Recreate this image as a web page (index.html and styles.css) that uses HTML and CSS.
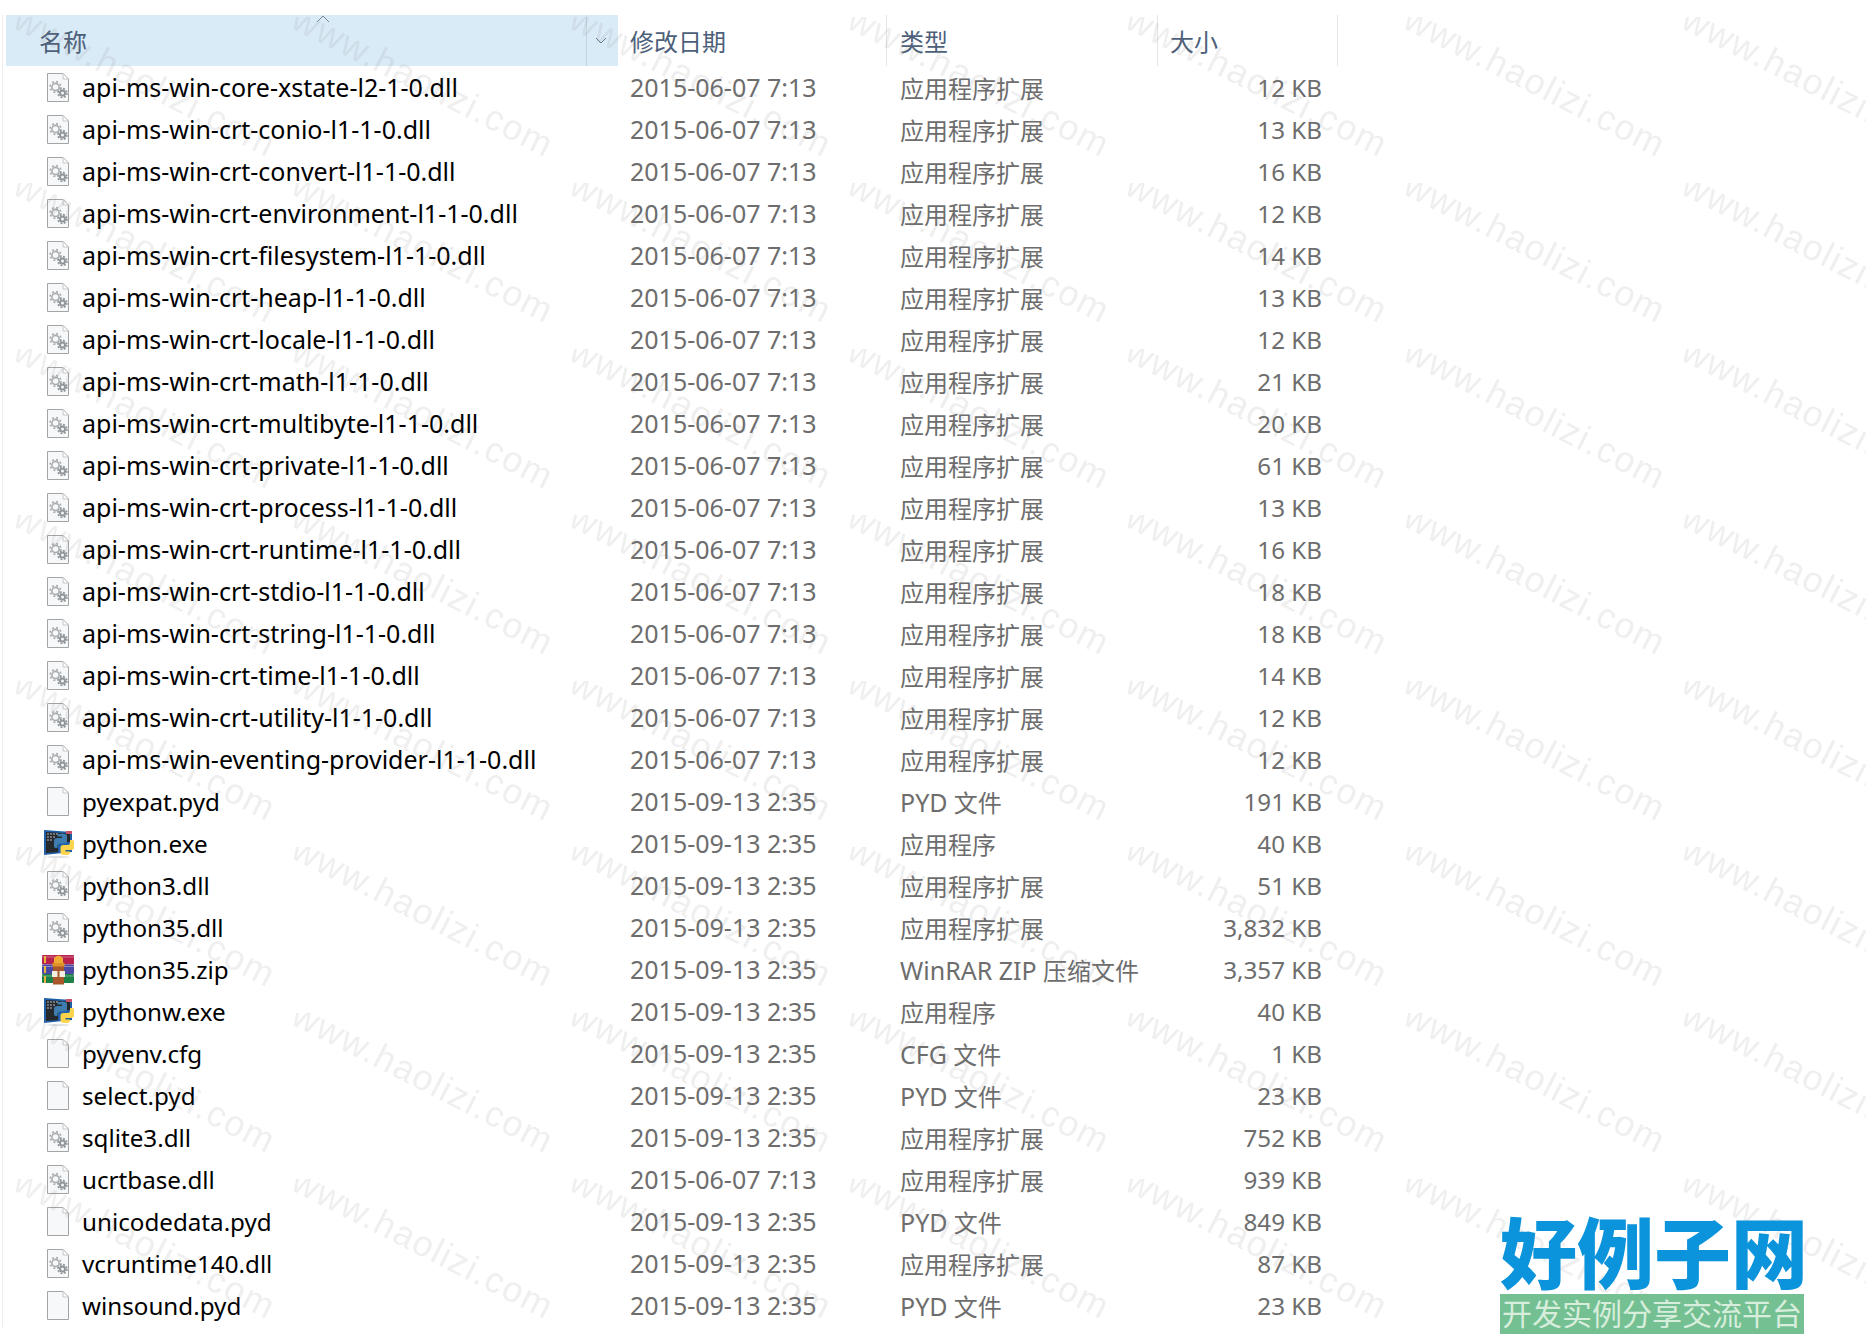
FILE: index.html
```html
<!DOCTYPE html>
<html lang="zh-CN">
<head>
  <meta charset="UTF-8" />
  <title>Python</title>
  <link rel="stylesheet" href="styles.css">
</head>
<body>
  <svg class="defs" width="0" height="0">
    <defs>
      <symbol id="page" viewBox="0 0 40 32">
        <path d="M9.5 2.5H25L30.5 8V30.5H9.5Z" fill="#f6f8f9" stroke="#a2a4a6"/>
        <path d="M25 2.5V8H30.5Z" fill="#fff" stroke="#c4c6c8"/>
      </symbol>
      <symbol id="dll" viewBox="0 0 40 32">
        <use href="#page"/>
        <circle cx="17.5" cy="16" r="3.6" fill="none" stroke="#a9adb0" stroke-width="1.6"/>
        <circle cx="17.5" cy="16" r="5.4" fill="none" stroke="#a9adb0" stroke-width="1.6" stroke-dasharray="2 2.24"/>
        <circle cx="24.5" cy="22" r="2.5" fill="none" stroke="#8f9599" stroke-width="2"/>
        <circle cx="24.5" cy="22" r="4.4" fill="none" stroke="#8f9599" stroke-width="1.6" stroke-dasharray="2 1.45"/>
      </symbol>
      <symbol id="py" viewBox="0 0 40 32">
        <path d="M6 3 34 5V25L6 28Z" fill="#1f5fa8"/>
        <path d="M8 5 32 6.500V15H20V25L8 26Z" fill="#26292c"/>
        <path d="M9 7H20M9 10H17M9 13H15" stroke="#8c9096" stroke-width="1.500" stroke-dasharray="2 1"/>
        <path d="M28 4H34V7H28Z" fill="#c9536a"/>
        <path d="M16 19V13.500Q16 11 19 11H24V9.500H19.500V8Q20 6.500 24 6.500Q29 6.500 29 9V14Q29 16.500 26 16.500H21.500Q19.500 16.500 19.500 19V21H17.500Q16 21 16 19Z" fill="#3f7cb0"/>
        <path d="M36 15V20.500Q36 23 33 23H27.500V24.500H32V26Q31.500 28 27.500 28Q22.500 28 22.500 25.500V20.500Q22.500 18 25.500 18H30Q32 18 32 15.500V13H34.500Q36 13 36 15Z" fill="#fbd44c"/>
        <ellipse cx="20" cy="30" rx="12" ry="1.200" fill="#dfe3e6"/>
      </symbol>
      <symbol id="rar" viewBox="0 0 40 32">
        <rect x="4" y="2" width="32" height="9.500" rx="1" fill="#b8234e"/>
        <rect x="4" y="11.500" width="32" height="9.500" rx="1" fill="#4a4aa5"/>
        <rect x="4" y="21" width="32" height="9" rx="1" fill="#1d8047"/>
        <path d="M4 4H36M4 13.500H36M4 23H36" stroke="#fff" stroke-opacity=".35"/>
        <path d="M7 3V30" stroke="#e9b53a" stroke-width="2" stroke-dasharray="7 3"/>
        <rect x="15" y="9" width="11" height="22.500" fill="#a8582a"/>
        <rect x="14" y="18" width="13" height="6" fill="#f3ede4"/>
        <path d="M20.500 18V25" stroke="#a8582a" stroke-width="2"/>
        <path d="M16 11V5Q20.500 0 25 5V11Z" fill="#f0ab34"/>
        <rect x="14.500" y="10" width="12" height="3.500" fill="#e0912a"/>
      </symbol>
    </defs>
  </svg>

  <main class="explorer">
    <div class="list-head">
      <div class="head-cell head-name">
        <span>名称</span>
        <svg class="sort-caret" width="14" height="8" viewBox="0 0 14 8"><path d="M1 7 7 1 13 7" fill="none" stroke="#7a8594"/></svg>
        <span class="head-drop">
          <svg width="12" height="7" viewBox="0 0 12 7"><path d="M1 1 6 6 11 1" fill="none" stroke="#6d7785"/></svg>
        </span>
      </div>
      <div class="head-cell head-date">修改日期</div>
      <div class="head-cell head-type">类型</div>
      <div class="head-cell head-size">大小</div>
    </div>

    <div class="file-row api"><div class="file-name"><svg class="file-icon"><use href="#dll"/></svg>api-ms-win-core-xstate-l2-1-0.dll</div><div class="file-date">2015-06-07 7:13</div><div class="file-type">应用程序扩展</div><div class="file-size">12 KB</div></div>
    <div class="file-row api"><div class="file-name"><svg class="file-icon"><use href="#dll"/></svg>api-ms-win-crt-conio-l1-1-0.dll</div><div class="file-date">2015-06-07 7:13</div><div class="file-type">应用程序扩展</div><div class="file-size">13 KB</div></div>
    <div class="file-row api"><div class="file-name"><svg class="file-icon"><use href="#dll"/></svg>api-ms-win-crt-convert-l1-1-0.dll</div><div class="file-date">2015-06-07 7:13</div><div class="file-type">应用程序扩展</div><div class="file-size">16 KB</div></div>
    <div class="file-row api"><div class="file-name"><svg class="file-icon"><use href="#dll"/></svg>api-ms-win-crt-environment-l1-1-0.dll</div><div class="file-date">2015-06-07 7:13</div><div class="file-type">应用程序扩展</div><div class="file-size">12 KB</div></div>
    <div class="file-row api"><div class="file-name"><svg class="file-icon"><use href="#dll"/></svg>api-ms-win-crt-filesystem-l1-1-0.dll</div><div class="file-date">2015-06-07 7:13</div><div class="file-type">应用程序扩展</div><div class="file-size">14 KB</div></div>
    <div class="file-row api"><div class="file-name"><svg class="file-icon"><use href="#dll"/></svg>api-ms-win-crt-heap-l1-1-0.dll</div><div class="file-date">2015-06-07 7:13</div><div class="file-type">应用程序扩展</div><div class="file-size">13 KB</div></div>
    <div class="file-row api"><div class="file-name"><svg class="file-icon"><use href="#dll"/></svg>api-ms-win-crt-locale-l1-1-0.dll</div><div class="file-date">2015-06-07 7:13</div><div class="file-type">应用程序扩展</div><div class="file-size">12 KB</div></div>
    <div class="file-row api"><div class="file-name"><svg class="file-icon"><use href="#dll"/></svg>api-ms-win-crt-math-l1-1-0.dll</div><div class="file-date">2015-06-07 7:13</div><div class="file-type">应用程序扩展</div><div class="file-size">21 KB</div></div>
    <div class="file-row api"><div class="file-name"><svg class="file-icon"><use href="#dll"/></svg>api-ms-win-crt-multibyte-l1-1-0.dll</div><div class="file-date">2015-06-07 7:13</div><div class="file-type">应用程序扩展</div><div class="file-size">20 KB</div></div>
    <div class="file-row api"><div class="file-name"><svg class="file-icon"><use href="#dll"/></svg>api-ms-win-crt-private-l1-1-0.dll</div><div class="file-date">2015-06-07 7:13</div><div class="file-type">应用程序扩展</div><div class="file-size">61 KB</div></div>
    <div class="file-row api"><div class="file-name"><svg class="file-icon"><use href="#dll"/></svg>api-ms-win-crt-process-l1-1-0.dll</div><div class="file-date">2015-06-07 7:13</div><div class="file-type">应用程序扩展</div><div class="file-size">13 KB</div></div>
    <div class="file-row api"><div class="file-name"><svg class="file-icon"><use href="#dll"/></svg>api-ms-win-crt-runtime-l1-1-0.dll</div><div class="file-date">2015-06-07 7:13</div><div class="file-type">应用程序扩展</div><div class="file-size">16 KB</div></div>
    <div class="file-row api"><div class="file-name"><svg class="file-icon"><use href="#dll"/></svg>api-ms-win-crt-stdio-l1-1-0.dll</div><div class="file-date">2015-06-07 7:13</div><div class="file-type">应用程序扩展</div><div class="file-size">18 KB</div></div>
    <div class="file-row api"><div class="file-name"><svg class="file-icon"><use href="#dll"/></svg>api-ms-win-crt-string-l1-1-0.dll</div><div class="file-date">2015-06-07 7:13</div><div class="file-type">应用程序扩展</div><div class="file-size">18 KB</div></div>
    <div class="file-row api"><div class="file-name"><svg class="file-icon"><use href="#dll"/></svg>api-ms-win-crt-time-l1-1-0.dll</div><div class="file-date">2015-06-07 7:13</div><div class="file-type">应用程序扩展</div><div class="file-size">14 KB</div></div>
    <div class="file-row api"><div class="file-name"><svg class="file-icon"><use href="#dll"/></svg>api-ms-win-crt-utility-l1-1-0.dll</div><div class="file-date">2015-06-07 7:13</div><div class="file-type">应用程序扩展</div><div class="file-size">12 KB</div></div>
    <div class="file-row api"><div class="file-name"><svg class="file-icon"><use href="#dll"/></svg>api-ms-win-eventing-provider-l1-1-0.dll</div><div class="file-date">2015-06-07 7:13</div><div class="file-type">应用程序扩展</div><div class="file-size">12 KB</div></div>
    <div class="file-row"><div class="file-name"><svg class="file-icon"><use href="#page"/></svg>pyexpat.pyd</div><div class="file-date">2015-09-13 2:35</div><div class="file-type"><span class="latin">PYD</span> 文件</div><div class="file-size">191 KB</div></div>
    <div class="file-row"><div class="file-name"><svg class="file-icon"><use href="#py"/></svg>python.exe</div><div class="file-date">2015-09-13 2:35</div><div class="file-type">应用程序</div><div class="file-size">40 KB</div></div>
    <div class="file-row"><div class="file-name"><svg class="file-icon"><use href="#dll"/></svg>python3.dll</div><div class="file-date">2015-09-13 2:35</div><div class="file-type">应用程序扩展</div><div class="file-size">51 KB</div></div>
    <div class="file-row"><div class="file-name"><svg class="file-icon"><use href="#dll"/></svg>python35.dll</div><div class="file-date">2015-09-13 2:35</div><div class="file-type">应用程序扩展</div><div class="file-size">3,832 KB</div></div>
    <div class="file-row"><div class="file-name"><svg class="file-icon"><use href="#rar"/></svg>python35.zip</div><div class="file-date">2015-09-13 2:35</div><div class="file-type"><span class="latin">WinRAR ZIP</span> 压缩文件</div><div class="file-size">3,357 KB</div></div>
    <div class="file-row"><div class="file-name"><svg class="file-icon"><use href="#py"/></svg>pythonw.exe</div><div class="file-date">2015-09-13 2:35</div><div class="file-type">应用程序</div><div class="file-size">40 KB</div></div>
    <div class="file-row"><div class="file-name"><svg class="file-icon"><use href="#page"/></svg>pyvenv.cfg</div><div class="file-date">2015-09-13 2:35</div><div class="file-type"><span class="latin">CFG</span> 文件</div><div class="file-size">1 KB</div></div>
    <div class="file-row"><div class="file-name"><svg class="file-icon"><use href="#page"/></svg>select.pyd</div><div class="file-date">2015-09-13 2:35</div><div class="file-type"><span class="latin">PYD</span> 文件</div><div class="file-size">23 KB</div></div>
    <div class="file-row"><div class="file-name"><svg class="file-icon"><use href="#dll"/></svg>sqlite3.dll</div><div class="file-date">2015-09-13 2:35</div><div class="file-type">应用程序扩展</div><div class="file-size">752 KB</div></div>
    <div class="file-row"><div class="file-name"><svg class="file-icon"><use href="#dll"/></svg>ucrtbase.dll</div><div class="file-date">2015-06-07 7:13</div><div class="file-type">应用程序扩展</div><div class="file-size">939 KB</div></div>
    <div class="file-row"><div class="file-name"><svg class="file-icon"><use href="#page"/></svg>unicodedata.pyd</div><div class="file-date">2015-09-13 2:35</div><div class="file-type"><span class="latin">PYD</span> 文件</div><div class="file-size">849 KB</div></div>
    <div class="file-row"><div class="file-name"><svg class="file-icon"><use href="#dll"/></svg>vcruntime140.dll</div><div class="file-date">2015-09-13 2:35</div><div class="file-type">应用程序扩展</div><div class="file-size">87 KB</div></div>
    <div class="file-row"><div class="file-name"><svg class="file-icon"><use href="#page"/></svg>winsound.pyd</div><div class="file-date">2015-09-13 2:35</div><div class="file-type"><span class="latin">PYD</span> 文件</div><div class="file-size">23 KB</div></div>
  </main>

  <!-- repeating site watermark over the whole shot -->
  <svg class="watermark" width="1866" height="1344">
    <defs>
      <pattern id="wm" x="12" y="17" width="278" height="166" patternUnits="userSpaceOnUse">
        <text class="wm-text" transform="translate(-1 10) rotate(27)">www.haolizi.com</text>
      </pattern>
    </defs>
    <rect width="1866" height="1344" fill="url(#wm)"/>
  </svg>

  <div class="logo">
    <div class="logo-title">好例子网</div>
    <div class="logo-sub">开发实例分享交流平台</div>
  </div>
</body>
</html>
```

FILE: styles.css
```css
* { margin: 0; padding: 0; box-sizing: border-box; }

:root {
  --head-text: #4c607a;
  --head-hover: #d9ebf7;
  --divider: #e5e5e5;
  --muted: #6d6d6d;
  --cols: 612px 269px 271px 180px;
}

body {
  position: relative;
  width: 1866px;
  height: 1344px;
  overflow: hidden;
  background: white;
  font-family: "Noto Sans", "Noto Sans CJK SC", sans-serif;
  font-size: 24px;
}

.defs {
  position: absolute;
}

.explorer {
  margin: 15px 0 0 2px;
  width: 1400px;
  height: 1312px;
  padding-left: 3px;
  border-left: 1px solid #eee;
}

.list-head {
  display: grid;
  grid-template-columns: var(--cols);
  height: 51px;
  color: var(--head-text);
}

.head-cell {
  display: flex;
  align-items: center;
  border-right: 1px solid var(--divider);
}

.head-name {
  position: relative;
  padding-left: 33px;
  background: var(--head-hover);
  border-right: none;
}

.sort-caret {
  position: absolute;
  left: 310px;
  top: 0;
}

.head-drop {
  position: absolute;
  right: 0;
  top: 0;
  bottom: 0;
  width: 32px;
  padding-right: 4px;
  display: flex;
  align-items: center;
  justify-content: center;
  border-left: 1px solid #c5d6e2;
}

.head-date { padding-left: 12px; }
.head-type { padding-left: 13px; }
.head-size { padding-left: 12px; }

.file-row {
  display: grid;
  grid-template-columns: var(--cols);
  height: 42px;
  align-items: center;
  white-space: nowrap;
}

.file-name {
  display: flex;
  align-items: center;
  gap: 4px;
  padding-left: 32px;
  font-size: 24.2px;
  color: black;
}

/* hyphens run wide in the long names */
.api .file-name { font-size: 25px; }

.file-icon {
  width: 40px;
  height: 32px;
  flex: none;
}

.file-date { padding-left: 12px; font-size: 25px; color: var(--muted); }
.file-type { padding-left: 13px; color: var(--muted); }
.file-size { padding-right: 16px; text-align: right; font-size: 24.2px; color: var(--muted); }

.latin { font-size: 25px; }

.watermark {
  position: absolute;
  left: 0;
  top: 0;
  pointer-events: none;
}

.wm-text {
  font-family: "Liberation Sans", sans-serif;
  font-size: 36px;
  letter-spacing: 1.5px;
  fill: rgba(120, 120, 120, 0.12);
}

.logo {
  position: absolute;
  left: 1500px;
  top: 1206px;
  width: 304px;
}

.logo-title {
  height: 88px;
  font-family: "Noto Sans CJK SC", sans-serif;
  font-size: 77px;
  font-weight: 900;
  line-height: 88px;
  text-align: center;
  white-space: nowrap;
  color: #0b93db;
}

.logo-sub {
  height: 40px;
  background: #74c092;
  font-family: "Noto Sans CJK SC", sans-serif;
  font-size: 30px;
  line-height: 37px;
  text-align: center;
  white-space: nowrap;
  color: #d8eedd;
}
```
